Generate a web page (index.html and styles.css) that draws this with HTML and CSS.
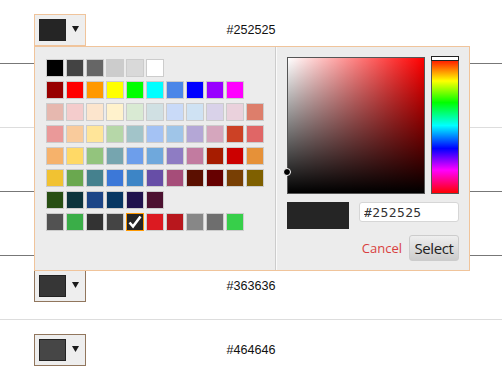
FILE: index.html
```html
<!DOCTYPE html>
<html lang="en">
<head>
  <meta charset="UTF-8">
  <title>Color pickers</title>
  <link rel="stylesheet" href="styles.css">
</head>
<body>

  <div class="list">

    <!-- First row: picker is open -->
    <div class="row line-dark">
      <div class="picker">
        <button class="replacer active">
          <span class="preview" style="background:#252525"></span>
          <span class="dd"></span>
        </button>

        <div class="popup">
          <!-- Palette -->
          <div class="palette">
            <div class="swatch-row">
              <span class="swatch" style="background:#000000"></span>
              <span class="swatch" style="background:#434343"></span>
              <span class="swatch" style="background:#666666"></span>
              <span class="swatch" style="background:#cccccc"></span>
              <span class="swatch" style="background:#d9d9d9"></span>
              <span class="swatch" style="background:#ffffff"></span>
            </div>
            <div class="swatch-row">
              <span class="swatch" style="background:#980000"></span>
              <span class="swatch" style="background:#ff0000"></span>
              <span class="swatch" style="background:#ff9900"></span>
              <span class="swatch" style="background:#ffff00"></span>
              <span class="swatch" style="background:#00ff00"></span>
              <span class="swatch" style="background:#00ffff"></span>
              <span class="swatch" style="background:#4a86e8"></span>
              <span class="swatch" style="background:#0000ff"></span>
              <span class="swatch" style="background:#9900ff"></span>
              <span class="swatch" style="background:#ff00ff"></span>
            </div>
            <div class="swatch-row">
              <span class="swatch" style="background:#e6b8af"></span>
              <span class="swatch" style="background:#f4cccc"></span>
              <span class="swatch" style="background:#fce5cd"></span>
              <span class="swatch" style="background:#fff2cc"></span>
              <span class="swatch" style="background:#d9ead3"></span>
              <span class="swatch" style="background:#d0e0e3"></span>
              <span class="swatch" style="background:#c9daf8"></span>
              <span class="swatch" style="background:#cfe2f3"></span>
              <span class="swatch" style="background:#d9d2e9"></span>
              <span class="swatch" style="background:#ead1dc"></span>
              <span class="swatch" style="background:#dd7e6b"></span>
            </div>
            <div class="swatch-row">
              <span class="swatch" style="background:#ea9999"></span>
              <span class="swatch" style="background:#f9cb9c"></span>
              <span class="swatch" style="background:#ffe599"></span>
              <span class="swatch" style="background:#b6d7a8"></span>
              <span class="swatch" style="background:#a2c4c9"></span>
              <span class="swatch" style="background:#a4c2f4"></span>
              <span class="swatch" style="background:#9fc5e8"></span>
              <span class="swatch" style="background:#b4a7d6"></span>
              <span class="swatch" style="background:#d5a6bd"></span>
              <span class="swatch" style="background:#cc4125"></span>
              <span class="swatch" style="background:#e06666"></span>
            </div>
            <div class="swatch-row">
              <span class="swatch" style="background:#f6b26b"></span>
              <span class="swatch" style="background:#ffd966"></span>
              <span class="swatch" style="background:#93c47d"></span>
              <span class="swatch" style="background:#76a5af"></span>
              <span class="swatch" style="background:#6d9eeb"></span>
              <span class="swatch" style="background:#6fa8dc"></span>
              <span class="swatch" style="background:#8e7cc3"></span>
              <span class="swatch" style="background:#c27ba0"></span>
              <span class="swatch" style="background:#a61c00"></span>
              <span class="swatch" style="background:#cc0000"></span>
              <span class="swatch" style="background:#e69138"></span>
            </div>
            <div class="swatch-row">
              <span class="swatch" style="background:#f1c232"></span>
              <span class="swatch" style="background:#6aa84f"></span>
              <span class="swatch" style="background:#45818e"></span>
              <span class="swatch" style="background:#3c78d8"></span>
              <span class="swatch" style="background:#3d85c6"></span>
              <span class="swatch" style="background:#674ea7"></span>
              <span class="swatch" style="background:#a64d79"></span>
              <span class="swatch" style="background:#5b0f00"></span>
              <span class="swatch" style="background:#660000"></span>
              <span class="swatch" style="background:#783f04"></span>
              <span class="swatch" style="background:#7f6000"></span>
            </div>
            <div class="swatch-row">
              <span class="swatch" style="background:#274e13"></span>
              <span class="swatch" style="background:#0c343d"></span>
              <span class="swatch" style="background:#1c4587"></span>
              <span class="swatch" style="background:#073763"></span>
              <span class="swatch" style="background:#20124d"></span>
              <span class="swatch" style="background:#4c1130"></span>
            </div>
            <!-- Recently used -->
            <div class="swatch-row">
              <span class="swatch" style="background:#525252"></span>
              <span class="swatch" style="background:#3aae48"></span>
              <span class="swatch" style="background:#333333"></span>
              <span class="swatch" style="background:#444444"></span>
              <span class="swatch selected" style="background:#252525">
                <svg width="16" height="16" viewBox="0 0 16 16"><path d="M2.5 8.5 L6 12.5 L13.5 2.5" fill="none" stroke="#fff" stroke-width="2.6"/></svg>
              </span>
              <span class="swatch" style="background:#dc1a21"></span>
              <span class="swatch" style="background:#b8171d"></span>
              <span class="swatch" style="background:#878787"></span>
              <span class="swatch" style="background:#6e6e6e"></span>
              <span class="swatch" style="background:#37cf4a"></span>
            </div>
          </div>

          <!-- Picker -->
          <div class="chooser">
            <div class="chooser-top">
              <div class="sat-val">
                <span class="drag-dot"></span>
              </div>
              <div class="hue">
                <span class="hue-handle"></span>
              </div>
            </div>
            <div class="chooser-input">
              <span class="current" style="background:#252525"></span>
              <input class="hex-input" type="text" value="#252525">
            </div>
            <div class="chooser-buttons">
              <a class="cancel" href="#">Cancel</a>
              <button class="select">Select</button>
            </div>
          </div>
        </div>
      </div>
      <span class="value">#252525</span>
    </div>

    <div class="row line-light">
      <div class="picker">
        <button class="replacer">
          <span class="preview" style="background:#000000"></span>
          <span class="dd"></span>
        </button>
      </div>
      <span class="value">#000000</span>
    </div>

    <div class="row line-dark">
      <div class="picker">
        <button class="replacer">
          <span class="preview" style="background:#141414"></span>
          <span class="dd"></span>
        </button>
      </div>
      <span class="value">#141414</span>
    </div>

    <div class="row line-dark">
      <div class="picker">
        <button class="replacer">
          <span class="preview" style="background:#1c1c1c"></span>
          <span class="dd"></span>
        </button>
      </div>
      <span class="value">#1c1c1c</span>
    </div>

    <div class="row line-light">
      <div class="picker">
        <button class="replacer">
          <span class="preview" style="background:#363636"></span>
          <span class="dd"></span>
        </button>
      </div>
      <span class="value">#363636</span>
    </div>

    <div class="row line-light">
      <div class="picker">
        <button class="replacer">
          <span class="preview" style="background:#464646"></span>
          <span class="dd"></span>
        </button>
      </div>
      <span class="value">#464646</span>
    </div>

  </div>

</body>
</html>
```

FILE: styles.css
```css
/* General Styles */
* {
  padding: 0;
  margin: 0;
  box-sizing: border-box;
}

body {
  font-family: 'Liberation Sans', Arial, sans-serif;
  background: #fff;
  color: #111;
  overflow: hidden;
}

/* Rows */
.row {
  display: grid;
  grid-template-columns: 1fr auto 1fr;
  align-items: start;
  height: 64px;
  padding-top: 14px;
}

.line-dark {
  border-bottom: 1px solid #777;
}

.line-light {
  border-bottom: 1px solid #ddd;
}

.value {
  font-size: 12.6px;
  line-height: 32px;
}

/* Replacer button */
.picker {
  position: relative;
  justify-self: start;
  margin-left: 34px;
}

.replacer {
  display: flex;
  align-items: center;
  height: 32px;
  padding: 4px 6px 4px 4px;
  background: #eee;
  border: 1px solid #91765d;
  cursor: pointer;
}

.replacer.active {
  border-color: #f0c49b;
}

.preview {
  width: 27px;
  height: 22px;
  border: 1px solid #222;
  margin-right: 6px;
}

.dd {
  width: 7px;
  height: 6px;
  margin-top: -2px;
  background: #1a1a1a;
  clip-path: polygon(0 0, 100% 0, 50% 100%);
}

/* Popup */
.popup {
  position: absolute;
  top: 100%;
  left: 0;
  z-index: 10;
  display: flex;
  width: 436px;
  height: 225px;
  background: #ececec;
  border: 1px solid #f0c49b;
}

.palette {
  width: 241px;
  padding: 12px 11px;
  border-right: 1px solid #ccc;
}

.swatch-row {
  display: flex;
  gap: 2px;
  margin-bottom: 4px;
}

.swatch {
  width: 18px;
  height: 18px;
  border: 1px solid #ccc;
}

.swatch.selected {
  border-color: #f90;
}

.swatch svg {
  display: block;
}

/* Chooser */
.chooser {
  flex: 1;
  padding: 10px 10px 9px;
  border-left: 1px solid #fafafa;
}

.chooser-top {
  display: flex;
  gap: 6px;
}

.sat-val {
  position: relative;
  width: 138px;
  height: 137px;
  border: 1px solid #555;
  background:
    linear-gradient(to top, #000, rgba(0, 0, 0, 0)),
    linear-gradient(to right, #fff, rgba(255, 255, 255, 0)),
    #f00;
}

.drag-dot {
  position: absolute;
  left: -5px;
  top: 110px;
  width: 8px;
  height: 8px;
  border-radius: 50%;
  background: #000;
  border: 1px solid #fff;
}

.hue {
  position: relative;
  width: 28px;
  height: 137px;
  border: 1px solid #555;
  background: linear-gradient(to bottom, #f00 0%, #ff0 17%, #0f0 33%, #0ff 50%, #00f 67%, #f0f 83%, #f00 100%);
}

.hue-handle {
  position: absolute;
  top: -2px;
  left: -1px;
  right: -1px;
  height: 5px;
  background: #fff;
  border: 1px solid #222;
}

.chooser-input {
  display: flex;
  gap: 10px;
  margin-top: 8px;
}

.current {
  width: 62px;
  height: 27px;
}

.hex-input {
  width: 100px;
  height: 20px;
  padding: 0 4px;
  font-family: 'DejaVu Sans Mono', monospace;
  font-size: 13px;
  letter-spacing: 0.4px;
  color: #333;
  background: #fff;
  border: 1px solid #d6d6d6;
  border-radius: 3px;
}

.chooser-buttons {
  display: flex;
  justify-content: flex-end;
  align-items: center;
  gap: 7px;
  margin-top: 6px;
}

.cancel {
  font-family: 'Open Sans', sans-serif;
  font-size: 13px;
  color: #d93f3f;
  text-decoration: none;
}

.select {
  width: 50px;
  height: 26px;
  font-family: 'Open Sans', sans-serif;
  font-size: 15px;
  letter-spacing: -0.4px;
  color: #222;
  background: linear-gradient(to bottom, #eee, #ccc);
  border: 1px solid #ccc;
  border-radius: 3px;
  cursor: pointer;
}
```
